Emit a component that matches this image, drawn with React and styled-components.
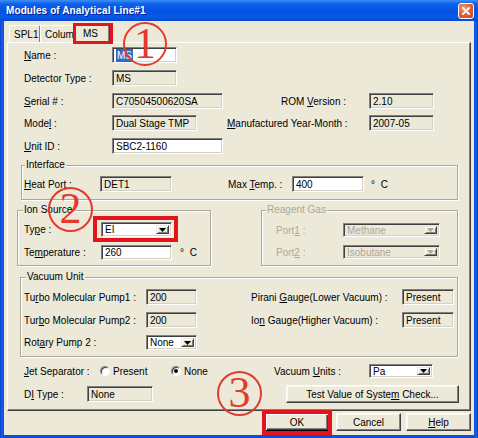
import React from "react";
import styled, { createGlobalStyle, css } from "styled-components";

const GlobalStyle = createGlobalStyle`
  * { box-sizing: border-box; }
  html, body { margin: 0; padding: 0; background: #ECE9D8; }
  body {
    font-family: "Liberation Sans Narrow", "Liberation Sans", Arial, sans-serif;
    font-size: 10px;
    color: #000;
  }
`;

const Stage = styled.div`
  position: relative;
  width: 478px;
  height: 438px;
  overflow: hidden;
`;

const Frame = styled.div`
  width: 478px;
  height: 438px;
  display: flex;
  flex-direction: column;
  padding-bottom: 3px;
  background: linear-gradient(to right, #0A3FCF 0, #1B5EEA 2px, #0B4EDF 4px, #0B4EDF 474px, #1B5EEA 476px, #0A3FCF 478px);
`;

const TitleBar = styled.div`
  flex: none;
  height: 21px;
  display: flex;
  align-items: center;
  justify-content: space-between;
  padding: 0 4px 0 6px;
  background: linear-gradient(to bottom, #3E8FF7 0%, #0F61EB 18%, #0454E3 50%, #0759E8 82%, #0A47C9 100%);
`;

const TitleText = styled.span`
  font-family: "Liberation Sans", Arial, sans-serif;
  font-weight: bold;
  font-size: 10px;
  letter-spacing: 0.1px;
  color: #fff;
  text-shadow: 1px 1px 0 #0A1E8C;
`;

const CloseButton = styled.span`
  width: 16px;
  height: 16px;
  display: flex;
  align-items: center;
  justify-content: center;
  border: 1px solid #fff;
  border-radius: 3px;
  background: radial-gradient(circle at 35% 30%, #F29C7E 0%, #E0643C 45%, #C8461E 100%);
`;

const Body = styled.div`
  flex: 1;
  margin: 0 4px;
  padding: 0 3px;
  background: #ECE9D8;
  display: flex;
  flex-direction: column;
`;

const TabStrip = styled.div`
  flex: none;
  height: 21px;
  display: flex;
  align-items: flex-end;
  padding-left: 2px;
`;

const Tab = styled.div`
  flex: none;
  position: relative;
  width: ${(p) => p.$w}px;
  height: 17px;
  padding-left: ${(p) => p.$pl}px;
  display: flex;
  align-items: center;
  white-space: nowrap;
  overflow: hidden;
  background: #ECE9D8;
  border-top: 1px solid #fff;
  border-left: 1px solid #fff;
  border-right: 1px solid #808080;
  border-radius: 2px 2px 0 0;
  ${(p) =>
    p.$active &&
    css`
      height: 20px;
      margin: 0 0 -1px -1px;
      overflow: visible;
      z-index: 2;
      border-right: 1px solid #404040;
      box-shadow: inset -1px 0 0 #808080;
    `}
`;

const Panel = styled.div`
  flex: none;
  height: 369px;
  position: relative;
  display: flex;
  flex-direction: column;
  padding-top: 4px;
  background: #ECE9D8;
  border: 1px solid;
  border-color: #fff #404040 #404040 #fff;
  box-shadow: inset -1px -1px 0 #808080;
`;

const Row = styled.div`
  flex: none;
  display: flex;
  align-items: center;
  height: ${(p) => p.$h || 16}px;
  margin-top: ${(p) => p.$mt || 0}px;
  padding-left: ${(p) => p.$pl || 0}px;
`;

const Label = styled.span`
  flex: none;
  width: ${(p) => p.$w}px;
  margin-left: ${(p) => p.$ml || 0}px;
  white-space: nowrap;
  color: ${(p) => (p.$disabled ? "#ACA899" : "#000")};
`;

const Unit = styled.span`
  flex: none;
  margin-left: ${(p) => p.$ml}px;
  white-space: nowrap;
  word-spacing: 3px;
`;

const sunken = css`
  border: 1px solid;
  border-color: #808080 #fff #fff #808080;
  box-shadow: inset 1px 1px 0 #404040, inset -1px -1px 0 #D4D0C8;
`;

const Field = styled.div`
  flex: none;
  width: ${(p) => p.$w}px;
  height: ${(p) => p.$h || 16}px;
  margin-left: ${(p) => p.$ml || 0}px;
  display: flex;
  align-items: center;
  padding: 0 2px 0 3px;
  white-space: nowrap;
  overflow: hidden;
  background: ${(p) => (p.$white ? "#fff" : "#ECE9D8")};
  ${sunken}
`;

const Selected = styled.span`
  background: #316AC5;
  color: #fff;
  padding: 1px 1px;
`;

const Select = styled.div`
  flex: none;
  position: relative;
  width: ${(p) => p.$w}px;
  height: ${(p) => p.$h || 15}px;
  margin-left: ${(p) => p.$ml || 0}px;
  display: flex;
  align-items: stretch;
  padding: 2px;
  background: ${(p) => (p.$disabled ? "#ECE9D8" : "#fff")};
  color: ${(p) => (p.$disabled ? "#ACA899" : "#000")};
  ${sunken}
`;

const SelectText = styled.span`
  flex: 1;
  display: flex;
  align-items: center;
  padding-left: 1px;
  white-space: nowrap;
  overflow: hidden;
`;

const DropButton = styled.span`
  flex: none;
  width: 13px;
  display: flex;
  align-items: center;
  justify-content: center;
  background: #ECE9D8;
  border: 1px solid;
  border-color: #ECE9D8 #404040 #404040 #ECE9D8;
  box-shadow: inset 1px 1px 0 #fff, inset -1px -1px 0 #808080;
`;

const Group = styled.div`
  flex: none;
  position: relative;
  display: flex;
  flex-direction: column;
  width: ${(p) => p.$w}px;
  height: ${(p) => p.$h}px;
  margin-left: ${(p) => p.$ml || 0}px;
  margin-top: ${(p) => p.$mt || 0}px;
  padding-top: ${(p) => p.$pt}px;
  padding-left: ${(p) => p.$pl}px;
  border: 1px solid #ACA899;
  box-shadow: 1px 1px 0 #fff, inset 1px 1px 0 #fff;
`;

const Caption = styled.span`
  position: absolute;
  top: -7px;
  left: ${(p) => p.$l}px;
  padding: 0 1px;
  line-height: 12px;
  background: #ECE9D8;
  white-space: nowrap;
  color: ${(p) => (p.$disabled ? "#ACA899" : "#000")};
`;

const GroupPair = styled.div`
  flex: none;
  display: flex;
  margin-top: ${(p) => p.$mt}px;
`;

const RadioOption = styled.span`
  flex: none;
  width: ${(p) => p.$w}px;
  display: flex;
  align-items: center;
  gap: 3px;
`;

const RadioDot = styled.span`
  flex: none;
  position: relative;
  width: 10px;
  height: 10px;
  border-radius: 50%;
  background: #fff;
  border: 1px solid;
  border-color: #808080 #fff #fff #808080;
  box-shadow: inset 1px 1px 0 #404040;
  ${(p) =>
    p.$checked &&
    css`
      &::after {
        content: "";
        position: absolute;
        left: 2px;
        top: 2px;
        width: 4px;
        height: 4px;
        border-radius: 50%;
        background: #000;
      }
    `}
`;

const Button = styled.button`
  flex: none;
  position: relative;
  width: ${(p) => p.$w}px;
  height: 18px;
  margin-left: ${(p) => p.$ml || 0}px;
  padding: 0;
  font: inherit;
  color: #000;
  background: #ECE9D8;
  border: 1px solid;
  border-color: #fff #404040 #404040 #fff;
  box-shadow: inset -1px -1px 0 #808080, inset 1px 1px 0 #F7F6F0;
  ${(p) =>
    p.$default &&
    css`
      border-color: #000;
      box-shadow: inset 1px 1px 0 #fff, inset -1px -1px 0 #404040, inset -2px -2px 0 #808080;
    `}
`;

const ButtonRow = styled.div`
  flex: none;
  display: flex;
  justify-content: flex-end;
  margin-top: 2px;
`;

const Mark = styled.span`
  position: absolute;
  pointer-events: none;
  z-index: 5;
  top: ${(p) => p.$t}px;
  left: ${(p) => p.$l}px;
  right: ${(p) => p.$r}px;
  bottom: ${(p) => p.$b}px;
  border: ${(p) => p.$bw || 4}px solid #E3141C;
`;

const Circled = styled.span`
  position: absolute;
  z-index: 10;
  left: ${(p) => p.$x}px;
  top: ${(p) => p.$y}px;
  width: ${(p) => p.$d}px;
  height: ${(p) => p.$d}px;
  border: 2px solid #E5392D;
  border-radius: 50%;
  display: flex;
  align-items: center;
  justify-content: center;
  padding-bottom: 1px;
  font-family: "Liberation Serif", "Times New Roman", serif;
  font-size: 44px;
  line-height: 1;
  color: #E5392D;
`;

const Arrow = ({ disabled }) => (
  <svg width="7" height="4" viewBox="0 0 7 4">
    <path d="M0 0h7L3.5 4z" fill={disabled ? "#ACA899" : "#000"} />
  </svg>
);

const Dropdown = ({ w, h, ml, disabled, children, mark }) => (
  <Select $w={w} $h={h} $ml={ml} $disabled={disabled}>
    <SelectText>{children}</SelectText>
    <DropButton>
      <Arrow disabled={disabled} />
    </DropButton>
    {mark}
  </Select>
);

export default function App() {
  return (
    <>
      <GlobalStyle />
      <Stage>
        <Frame>
          <TitleBar>
            <TitleText>Modules of Analytical Line#1</TitleText>
            <CloseButton>
              <svg width="8" height="8" viewBox="0 0 8 8">
                <path d="M1 1L7 7M7 1L1 7" stroke="#fff" strokeWidth="1.8" strokeLinecap="square" />
              </svg>
            </CloseButton>
          </TitleBar>
          <Body>
            <TabStrip>
              <Tab $w={31} $pl={4}>SPL1</Tab>
              <Tab $w={34} $pl={4}>Column</Tab>
              <Tab $w={37} $pl={9} $active>
                MS
                <Mark $t={-1} $l={-1} $r={-4} $b={-1} $bw={3} />
              </Tab>
            </TabStrip>
            <Panel>
              <Row $pl={16}>
                <Label $w={88}><u>N</u>ame :</Label>
                <Field $w={65} $white>
                  <Selected>MS</Selected>
                </Field>
              </Row>
              <Row $pl={16} $mt={7}>
                <Label $w={88}>Detector Type :</Label>
                <Field $w={65}>MS</Field>
              </Row>
              <Row $pl={16} $mt={7}>
                <Label $w={88}><u>S</u>erial # :</Label>
                <Field $w={111}>C70504500620SA</Field>
                <Label $w={88} $ml={58}>ROM <u>V</u>ersion :</Label>
                <Field $w={65}>2.10</Field>
              </Row>
              <Row $pl={16} $mt={6}>
                <Label $w={88}>Mode<u>l</u> :</Label>
                <Field $w={85}>Dual Stage TMP</Field>
                <Label $w={142} $ml={30}><u>M</u>anufactured Year-Month :</Label>
                <Field $w={65}>2007-05</Field>
              </Row>
              <Row $pl={16} $mt={7}>
                <Label $w={88}><u>U</u>nit ID :</Label>
                <Field $w={111} $white>SBC2-1160</Field>
              </Row>

              <Group $ml={13} $mt={11} $w={437} $h={35} $pt={10} $pl={2}>
                <Caption $l={3}>Interface</Caption>
                <Row>
                  <Label $w={76}><u>H</u>eat Port :</Label>
                  <Field $w={72}>DET1</Field>
                  <Label $w={64} $ml={56}>Max <u>T</u>emp. :</Label>
                  <Field $w={72} $white>400</Field>
                  <Unit $ml={7}>° C</Unit>
                </Row>
              </Group>

              <GroupPair $mt={10}>
                <Group $ml={9} $w={194} $h={56} $pt={11} $pl={6}>
                  <Caption $l={5}>Ion Source</Caption>
                  <Row $h={15}>
                    <Label $w={77}>Ty<u>p</u>e :</Label>
                    <Dropdown w={71} mark={<Mark $t={-7} $l={-9} $r={-7} $b={-6} $bw={4} />}>
                      EI
                    </Dropdown>
                  </Row>
                  <Row $h={15} $mt={8}>
                    <Label $w={77}>Te<u>m</u>perature :</Label>
                    <Field $w={71} $h={15} $white>260</Field>
                    <Unit $ml={8}>° C</Unit>
                  </Row>
                </Group>
                <Group $ml={50} $w={197} $h={56} $pt={12} $pl={14}>
                  <Caption $l={4} $disabled>Reagent Gas</Caption>
                  <Row $h={14}>
                    <Label $w={67} $disabled>Port<u>1</u> :</Label>
                    <Dropdown w={97} h={14} disabled>Methane</Dropdown>
                  </Row>
                  <Row $h={14} $mt={8}>
                    <Label $w={67} $disabled>Port<u>2</u> :</Label>
                    <Dropdown w={97} h={14} disabled>Isobutane</Dropdown>
                  </Row>
                </Group>
              </GroupPair>

              <Group $ml={12} $mt={11} $w={438} $h={80} $pt={11} $pl={3}>
                <Caption $l={5}>Vacuum Unit</Caption>
                <Row>
                  <Label $w={122}>Tu<u>r</u>bo Molecular Pump1 :</Label>
                  <Field $w={51}>200</Field>
                  <Label $w={151} $ml={54}>Pirani <u>G</u>auge(Lower Vacuum) :</Label>
                  <Field $w={52}>Present</Field>
                </Row>
                <Row $mt={7}>
                  <Label $w={122}>Tur<u>b</u>o Molecular Pump2 :</Label>
                  <Field $w={51}>200</Field>
                  <Label $w={151} $ml={54}>Io<u>n</u> Gauge(Higher Vacuum) :</Label>
                  <Field $w={52}>Present</Field>
                </Row>
                <Row $h={15} $mt={7}>
                  <Label $w={122}>Rot<u>a</u>ry Pump 2 :</Label>
                  <Dropdown w={51}>None</Dropdown>
                </Row>
              </Group>

              <Row $pl={16} $mt={6}>
                <Label $w={76}><u>J</u>et Separator :</Label>
                <RadioOption $w={71}>
                  <RadioDot />
                  Present
                </RadioOption>
                <RadioOption $w={103}>
                  <RadioDot $checked />
                  None
                </RadioOption>
                <Label $w={95}>Vacuum <u>U</u>nits :</Label>
                <Dropdown w={64} h={14}>Pa</Dropdown>
              </Row>
              <Row $pl={16} $mt={6} $h={18}>
                <Label $w={63}>D<u>I</u> Type :</Label>
                <Field $w={66}>None</Field>
                <Button $w={173} $ml={133}>
                  Test Value of Syste<u>m</u> Check...
                </Button>
              </Row>
            </Panel>
            <ButtonRow>
              <Button $w={64} $default>
                OK
                <Mark $t={-4} $l={-4} $r={-4} $b={-5} $bw={4} />
              </Button>
              <Button $w={65} $ml={7}>Cancel</Button>
              <Button $w={65} $ml={5}><u>H</u>elp</Button>
            </ButtonRow>
          </Body>
        </Frame>
        <Circled $x={123} $y={22} $d={44}>1</Circled>
        <Circled $x={48} $y={187} $d={45}>2</Circled>
        <Circled $x={217} $y={371} $d={45}>3</Circled>
      </Stage>
    </>
  );
}
